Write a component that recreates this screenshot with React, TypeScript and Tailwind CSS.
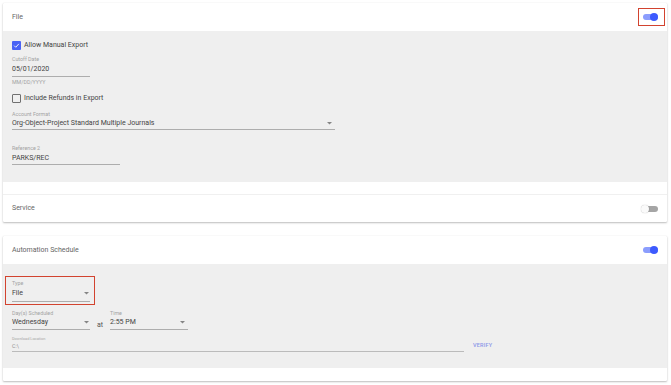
import React from 'react';

function Toggle({ on }: { on: boolean }) {
  return (
    <div className="relative w-[16px] h-[10px] flex items-center">
      <div className={`w-[15px] h-[6px] rounded-full ${on ? 'bg-[#8b9dfd]' : 'bg-[#a5a5a5]'}`} />
      <div
        className={`absolute top-[1px] w-[8px] h-[8px] rounded-full ${
          on ? 'left-[7px] bg-[#3d5afe]' : 'left-[-2px] bg-[#fafafa] shadow-[0_0_1px_rgba(0,0,0,0.35)]'
        }`}
      />
    </div>
  );
}

function Arrow() {
  return (
    <svg width="5" height="3" viewBox="0 0 5 3" className="shrink-0">
      <path d="M0 0 L5 0 L2.5 2.6 Z" fill="#858585" />
    </svg>
  );
}

function Checkbox({ checked }: { checked: boolean }) {
  if (checked) {
    return (
      <div className="w-[9px] h-[9px] rounded-[1px] bg-[#4a63f5] flex items-center justify-center">
        <svg width="7" height="7" viewBox="0 0 24 24">
          <path d="M4 12.5 L9.5 18 L20 6.5" stroke="#fff" strokeWidth="3" fill="none" />
        </svg>
      </div>
    );
  }
  return <div className="w-[9px] h-[9px] rounded-[1px] border border-[#707070]" />;
}

function Label({ children }: { children: React.ReactNode }) {
  return <div className="h-[6px] leading-[6px] text-[5.3px] text-[#a3a3a3]">{children}</div>;
}

export default function App() {
  return (
    <div className="min-h-screen bg-white pl-[3px] pr-[4px] pt-[3px] font-['Roboto',sans-serif]">
      {/* File + Service panels */}
      <div className="bg-white shadow-[0_1px_2px_rgba(0,0,0,0.25),0_0_1px_rgba(0,0,0,0.12)] rounded-[1px]">
        <div className="h-[28px] flex items-center justify-between pl-[9px] pr-[8px]">
          <span className="text-[7px] text-[#666]">File</span>
          <div className="relative">
            <Toggle on />
            <div className="absolute left-[-5px] top-[-4px] w-[27px] h-[18px] border-[1.5px] border-[#d2432f]" />
          </div>
        </div>
        <div className="bg-[#efefef] h-[151px] px-[9px] pt-[10px]">
          <div className="flex items-center gap-[3px] h-[9px]">
            <Checkbox checked />
            <span className="text-[7px] text-[#444]">Allow Manual Export</span>
          </div>
          <div className="mt-[6px]">
            <Label>Cutoff Date</Label>
            <div className="w-[78px] h-[15px] leading-[14px] text-[7px] text-[#444] border-b border-[#adadad]">05/01/2020</div>
            <div className="mt-[1px] h-[8px] leading-[8px] text-[5.3px] text-[#a3a3a3]">MM/DD/YYYY</div>
          </div>
          <div className="mt-[8px] flex items-center gap-[3px] h-[9px]">
            <Checkbox checked={false} />
            <span className="text-[7px] text-[#444]">Include Refunds in Export</span>
          </div>
          <div className="mt-[8px]">
            <Label>Account Format</Label>
            <div className="w-[323px] h-[13px] flex items-center justify-between pr-[3px] border-b border-[#adadad]">
              <span className="text-[7px] text-[#444]">Org-Object-Project Standard Multiple Journals</span>
              <Arrow />
            </div>
          </div>
          <div className="mt-[15px]">
            <Label>Reference 2</Label>
            <div className="w-[108px] h-[14px] leading-[14px] text-[7px] text-[#444] border-b border-[#adadad]">PARKS/REC</div>
          </div>
        </div>
        <div className="h-[12px]" />
        <div className="h-[28px] flex items-center justify-between pl-[9px] pr-[8px] border-t border-[#f0f0f0]">
          <span className="text-[7px] text-[#666]">Service</span>
          <Toggle on={false} />
        </div>
      </div>

      {/* Automation Schedule */}
      <div className="mt-[14px] bg-white shadow-[0_1px_2px_rgba(0,0,0,0.25),0_0_1px_rgba(0,0,0,0.12)] rounded-[1px]">
        <div className="h-[28px] flex items-center justify-between pl-[9px] pr-[8px]">
          <span className="text-[7px] text-[#666]">Automation Schedule</span>
          <Toggle on />
        </div>
        <div className="bg-[#efefef] h-[104px] px-[9px] pt-[16px]">
          <div className="relative w-[78px]">
            <Label>Type</Label>
            <div className="h-[16px] flex items-center justify-between pr-[1px] border-b border-[#adadad]">
              <span className="text-[7px] text-[#444]">File</span>
              <Arrow />
            </div>
            <div className="absolute left-[-7px] right-[-5px] top-[-4px] bottom-[-3px] border-[1.5px] border-[#d2432f]" />
          </div>
          <div className="mt-[8px] flex items-end">
            <div className="w-[78px]">
              <Label>Day(s) Scheduled</Label>
              <div className="h-[14px] flex items-center justify-between pr-[1px] border-b border-[#adadad]">
                <span className="text-[7px] text-[#444]">Wednesday</span>
                <Arrow />
              </div>
            </div>
            <span className="w-[20px] pl-[7px] text-[7px] text-[#555] leading-[9px]">at</span>
            <div className="w-[78px]">
              <Label>Time</Label>
              <div className="h-[14px] flex items-center justify-between pr-[3px] border-b border-[#adadad]">
                <span className="text-[7px] text-[#444]">2:55 PM</span>
                <Arrow />
              </div>
            </div>
          </div>
          <div className="mt-[7px] flex items-end">
            <div className="w-[452px]">
              <div className="h-[4px] leading-[4px] text-[3.9px] text-[#a8a8a8]">Download Location</div>
              <div className="h-[11px] leading-[11px] text-[5.3px] text-[#8f8f8f] border-b border-[#bbbbbb]">C:\</div>
            </div>
            <span className="ml-[9px] mb-[3px] text-[5.5px] font-medium tracking-[0.2px] text-[#8a96e8]">VERIFY</span>
          </div>
        </div>
        <div className="h-[13px]" />
      </div>
    </div>
  );
}
